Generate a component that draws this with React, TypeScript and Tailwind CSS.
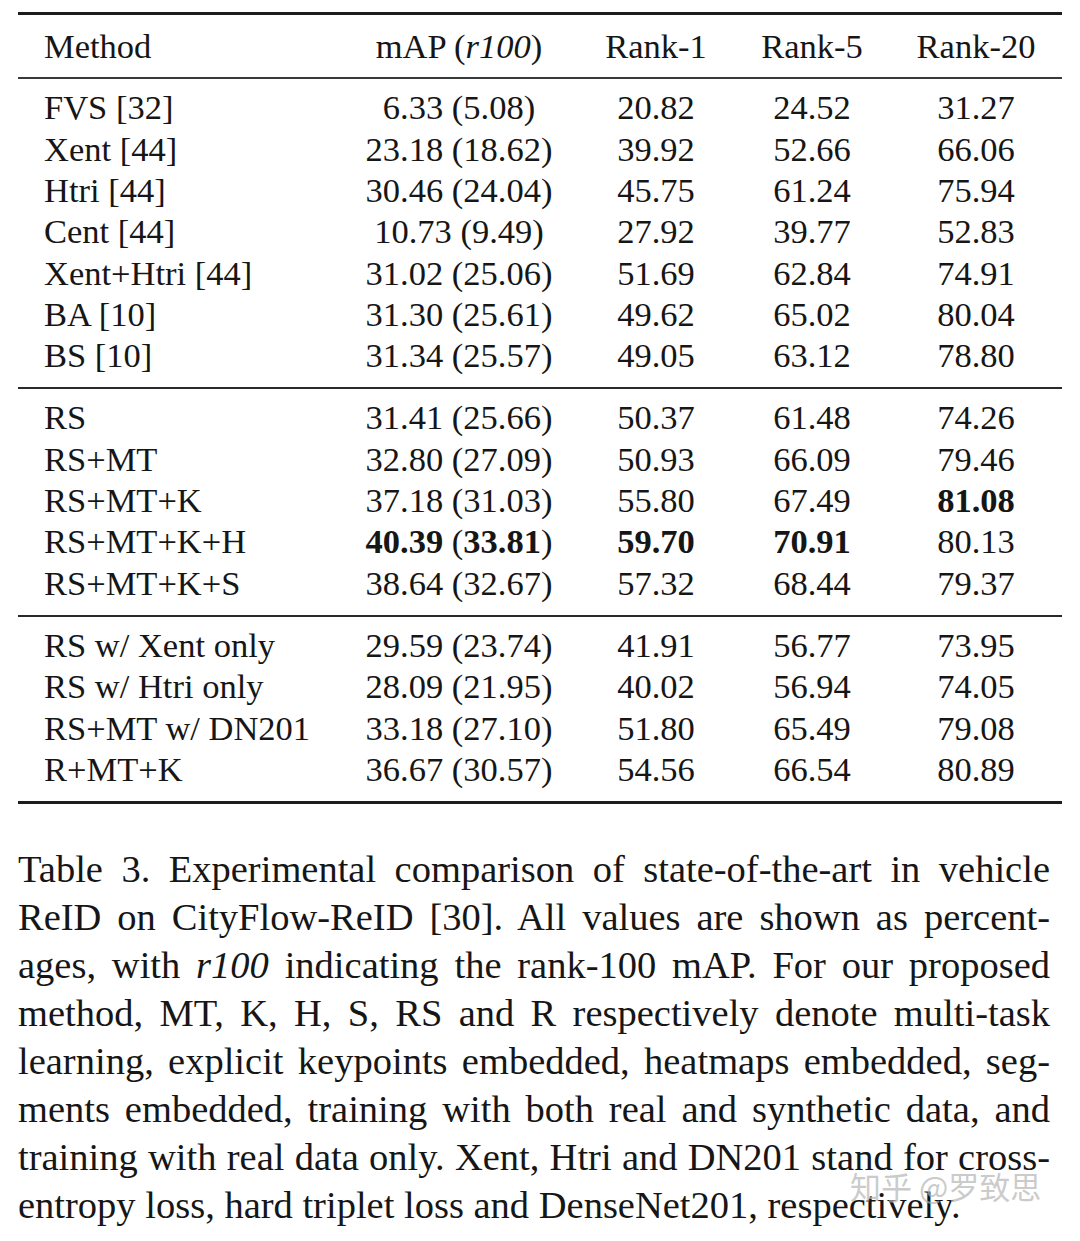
type Row = {
  method: string;
  map: React.ReactNode;
  r1: React.ReactNode;
  r5: React.ReactNode;
  r20: React.ReactNode;
};

const groups: Row[][] = [
  [
    { method: "FVS [32]", map: "6.33 (5.08)", r1: "20.82", r5: "24.52", r20: "31.27" },
    { method: "Xent [44]", map: "23.18 (18.62)", r1: "39.92", r5: "52.66", r20: "66.06" },
    { method: "Htri [44]", map: "30.46 (24.04)", r1: "45.75", r5: "61.24", r20: "75.94" },
    { method: "Cent [44]", map: "10.73 (9.49)", r1: "27.92", r5: "39.77", r20: "52.83" },
    { method: "Xent+Htri [44]", map: "31.02 (25.06)", r1: "51.69", r5: "62.84", r20: "74.91" },
    { method: "BA [10]", map: "31.30 (25.61)", r1: "49.62", r5: "65.02", r20: "80.04" },
    { method: "BS [10]", map: "31.34 (25.57)", r1: "49.05", r5: "63.12", r20: "78.80" },
  ],
  [
    { method: "RS", map: "31.41 (25.66)", r1: "50.37", r5: "61.48", r20: "74.26" },
    { method: "RS+MT", map: "32.80 (27.09)", r1: "50.93", r5: "66.09", r20: "79.46" },
    { method: "RS+MT+K", map: "37.18 (31.03)", r1: "55.80", r5: "67.49", r20: <b>81.08</b> },
    {
      method: "RS+MT+K+H",
      map: (
        <>
          <b>40.39</b> (<b>33.81</b>)
        </>
      ),
      r1: <b>59.70</b>,
      r5: <b>70.91</b>,
      r20: "80.13",
    },
    { method: "RS+MT+K+S", map: "38.64 (32.67)", r1: "57.32", r5: "68.44", r20: "79.37" },
  ],
  [
    { method: "RS w/ Xent only", map: "29.59 (23.74)", r1: "41.91", r5: "56.77", r20: "73.95" },
    { method: "RS w/ Htri only", map: "28.09 (21.95)", r1: "40.02", r5: "56.94", r20: "74.05" },
    { method: "RS+MT w/ DN201", map: "33.18 (27.10)", r1: "51.80", r5: "65.49", r20: "79.08" },
    { method: "R+MT+K", map: "36.67 (30.57)", r1: "54.56", r5: "66.54", r20: "80.89" },
  ],
];

const cols = "grid grid-cols-[332px_218px_176px_136px_182px]";

function TableRow({ row }: { row: Row }) {
  return (
    <div className={`${cols} h-[41.3px] items-center`}>
      <div className="pl-[26px] whitespace-nowrap">{row.method}</div>
      <div className="text-center whitespace-nowrap">{row.map}</div>
      <div className="text-center">{row.r1}</div>
      <div className="text-center">{row.r5}</div>
      <div className="pl-[10px] text-center">{row.r20}</div>
    </div>
  );
}

const captionLines: React.ReactNode[] = [
  "Table 3. Experimental comparison of state-of-the-art in vehicle",
  "ReID on CityFlow-ReID [30].  All values are shown as percent-",
  <>
    ages, with <i>r100</i> indicating the rank-100 mAP. For our proposed
  </>,
  "method, MT, K, H, S, RS and R respectively denote multi-task",
  "learning, explicit keypoints embedded, heatmaps embedded, seg-",
  "ments embedded, training with both real and synthetic data, and",
  "training with real data only. Xent, Htri and DN201 stand for cross-",
];

export default function App() {
  return (
    <div className="relative w-[1080px] h-[1241px] bg-white text-[#161616] font-['Liberation_Serif',serif] overflow-hidden">
      <div className="pt-[12px] px-[18px]">
        <div className="w-[1044px] text-[34.5px] leading-none">
          <div className="h-[3px] bg-[#1c1c1c]" />
          <div className={`${cols} h-[62px] items-center`}>
            <div className="pl-[26px]">Method</div>
            <div className="text-center">
              mAP (<i>r100</i>)
            </div>
            <div className="text-center">Rank-1</div>
            <div className="text-center">Rank-5</div>
            <div className="pl-[10px] text-center">Rank-20</div>
          </div>
          {groups.map((g, i) => (
            <div key={i}>
              <div className={i === 0 ? "h-[2px] bg-[#3a3a3a]" : "h-[2px] bg-[#2a2a2a]"} />
              <div className="pt-[8px] pb-[11px]">
                {g.map((r) => (
                  <TableRow key={r.method} row={r} />
                ))}
              </div>
            </div>
          ))}
          <div className="h-[3px] bg-[#1c1c1c]" />
        </div>

        <div className="mt-[41px] w-[1032px] text-[38.5px] leading-[48px]">
          {captionLines.map((l, i) => (
            <div key={i} className="text-justify [text-align-last:justify] whitespace-nowrap">
              {l}
            </div>
          ))}
          <div>entropy loss, hard triplet loss and DenseNet201, respectively.</div>
        </div>
      </div>

      <div className="absolute left-[850px] top-[1170px] text-[31px] leading-none text-[#b4b4b4]/70 font-['Noto_Sans_CJK_SC',sans-serif] whitespace-nowrap">
        知乎 @罗致思
      </div>
    </div>
  );
}
